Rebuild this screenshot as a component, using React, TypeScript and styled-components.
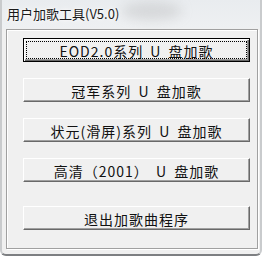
import React from 'react';
import styled, {createGlobalStyle} from "styled-components";

const GlobalStyle = createGlobalStyle`
  html, body {
    margin: 0;
    padding: 0;
    background: #ffffff;
  }
`

const items = [
    'EOD2.0系列 U 盘加歌',
    '冠军系列 U 盘加歌',
    '状元(滑屏)系列 U 盘加歌',
    '高清（2001） U 盘加歌',
];

export default function App() {
    return (
        <>
            <GlobalStyle/>
            <Window>
                <TitleBar>
                    <Title>用户加歌工具(V5.0)</Title>
                    <Blur/>
                </TitleBar>
                <Panel>
                    {items.map((text, i) => (
                        <Button key={text} $focused={i === 0}>
                            <Label $focused={i === 0}>{text}</Label>
                        </Button>
                    ))}
                    <Button $last>
                        <Label>退出加歌曲程序</Label>
                    </Button>
                </Panel>
            </Window>
        </>
    );
}

const Window = styled.div`
  width: 262px;
  height: 256px;
  box-sizing: border-box;
  background: #f0f0f0;
  border-left: 2px solid #c9cbcd;
  border-right: 2px solid #c9cbcd;
  border-bottom: 2px solid #7d7f82;
  border-radius: 0 0 6px 6px;
  display: flex;
  flex-direction: column;
  overflow: hidden;
  background-image: linear-gradient(to bottom, #e9ecef 0px, #eef0f2 28px, #f0f0f0 29px);
`

const TitleBar = styled.div`
  height: 29px;
  position: relative;
  display: flex;
  align-items: center;
  padding-left: 5px;
`

const Title = styled.span`
  font-family: "Noto Sans CJK SC", sans-serif;
  font-size: 13px;
  color: #1a1a1a;
  text-shadow: 0 0 6px #ffffff, 0 0 3px #ffffff;
  position: relative;
  z-index: 1;
  margin-top: -2px;
`

const Blur = styled.div`
  position: absolute;
  left: 120px;
  top: 2px;
  width: 60px;
  height: 18px;
  border-radius: 50%;
  background: rgba(150, 150, 150, 0.25);
  filter: blur(6px);
`

const Panel = styled.div`
  margin: 0 2px 0 4px;
  height: 220px;
  box-sizing: border-box;
  border: 1px solid #a0a0a0;
  box-shadow: 1px 1px 0 #ffffff, inset 1px 1px 0 #ffffff;
  padding: 8px 7px 0 16px;
  display: flex;
  flex-direction: column;
  gap: 16px;
`

const Button = styled.div<{ $focused?: boolean; $last?: boolean }>`
  height: 24px;
  box-sizing: border-box;
  margin-top: ${p => p.$last ? '8px' : '0'};
  background: #f0f0f0;
  border: 1px solid ${p => p.$focused ? '#000000' : '#f0f0f0'};
  border-top-color: ${p => p.$focused ? '#000000' : '#ffffff'};
  border-left-color: ${p => p.$focused ? '#000000' : '#ffffff'};
  border-right-color: ${p => p.$focused ? '#000000' : '#696969'};
  border-bottom-color: ${p => p.$focused ? '#000000' : '#696969'};
  box-shadow: ${p => p.$focused
          ? 'inset 1px 1px 0 #ffffff, inset -1px -1px 0 #696969, inset -2px -2px 0 #a0a0a0'
          : 'inset -1px -1px 0 #a0a0a0'};
  display: flex;
  align-items: center;
  justify-content: center;
  padding: 3px;
`

const Label = styled.span<{ $focused?: boolean }>`
  flex: 1;
  align-self: stretch;
  display: flex;
  align-items: center;
  justify-content: center;
  font-family: "Noto Sans CJK SC", sans-serif;
  font-size: 14px;
  letter-spacing: 1px;
  word-spacing: 3px;
  padding-top: 1px;
  color: #111111;
  white-space: pre;
  outline: ${p => p.$focused ? '1px dotted #000000' : 'none'};
  line-height: 1;
`
